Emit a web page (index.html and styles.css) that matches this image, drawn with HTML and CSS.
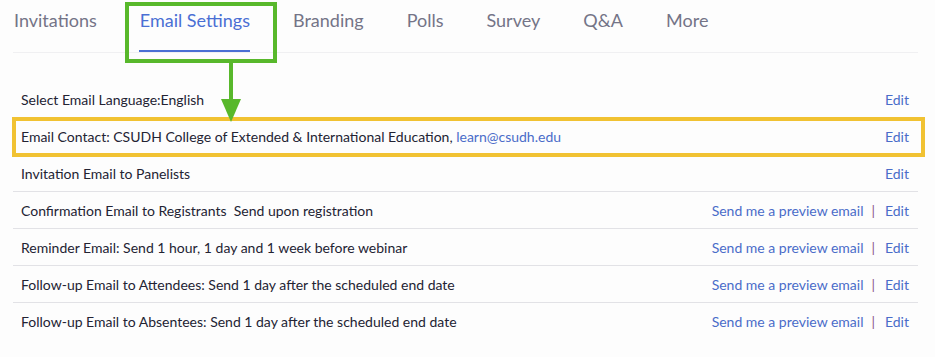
FILE: index.html
```html
<!DOCTYPE html>
<html lang="en">
<head>
    <meta charset="UTF-8">
    <title>Email Settings</title>
    <link rel="stylesheet" href="styles.css">
</head>
<body>
    <div class="page">
        <ul class="tabs">
            <li class="tab">Invitations</li>
            <li class="tab active">Email Settings</li>
            <li class="tab">Branding</li>
            <li class="tab">Polls</li>
            <li class="tab">Survey</li>
            <li class="tab">Q&amp;A</li>
            <li class="tab">More</li>
        </ul>

        <ul class="settings">
            <li class="setting-row first">
                <span class="label">Select Email Language:English</span>
                <span class="actions"><a class="link">Edit</a></span>
            </li>
            <li class="setting-row highlight">
                <span class="label">Email Contact: CSUDH College of Extended &amp; International Education, <a class="link">learn@csudh.edu</a></span>
                <span class="actions"><a class="link">Edit</a></span>
            </li>
            <li class="setting-row">
                <span class="label">Invitation Email to Panelists</span>
                <span class="actions"><a class="link">Edit</a></span>
            </li>
            <li class="setting-row">
                <span class="label">Confirmation Email to Registrants&nbsp; Send upon registration</span>
                <span class="actions"><a class="link">Send me a preview email</a><span class="divider">|</span><a class="link">Edit</a></span>
            </li>
            <li class="setting-row">
                <span class="label">Reminder Email: Send 1 hour, 1 day and 1 week before webinar</span>
                <span class="actions"><a class="link">Send me a preview email</a><span class="divider">|</span><a class="link">Edit</a></span>
            </li>
            <li class="setting-row">
                <span class="label">Follow-up Email to Attendees: Send 1 day after the scheduled end date</span>
                <span class="actions"><a class="link">Send me a preview email</a><span class="divider">|</span><a class="link">Edit</a></span>
            </li>
            <li class="setting-row last">
                <span class="label">Follow-up Email to Absentees: Send 1 day after the scheduled end date</span>
                <span class="actions"><a class="link">Send me a preview email</a><span class="divider">|</span><a class="link">Edit</a></span>
            </li>
        </ul>

        <!-- annotation overlays -->
        <div class="callout-box"></div>
        <div class="callout-arrow">
            <svg width="22" height="60" viewBox="0 0 22 60">
                <rect x="9" y="0" width="4" height="40" fill="#58b82b"/>
                <polygon points="1,36 21,36 11,59" fill="#58b82b"/>
            </svg>
        </div>
    </div>
</body>
</html>
```

FILE: styles.css
```css
body {
    margin: 0;
    padding: 0;
    background-color: #fdfdfd;
    font-family: 'Lato', 'Open Sans', sans-serif;
    color: #232333;
}

.page {
    position: relative;
    width: 935px;
    height: 357px;
    padding: 0 17px 0 13px;
    box-sizing: border-box;
}

/* tabs */

.tabs {
    list-style: none;
    margin: 0;
    padding: 0;
    display: flex;
    gap: 42px;
    height: 52px;
    border-bottom: 1px solid #f0f0f2;
}

.tab {
    font-size: 18px;
    color: #747487;
    padding-top: 9px;
    padding-left: 1px;
    box-sizing: border-box;
    height: 52px;
}

.tab.active {
    color: #4a6fd4;
    border-bottom: 2px solid #4a6fd4;
}

/* settings list */

.settings {
    list-style: none;
    margin: 28px 0 0 0;
    padding: 0;
    font-size: 14px;
}

.setting-row {
    display: flex;
    justify-content: space-between;
    align-items: center;
    height: 36px;
    padding: 0 9px 0 8px;
    border-bottom: 1px solid #e2e2e6;
}

.setting-row.first {
    border-bottom-color: transparent;
}

.setting-row.last {
    border-bottom: none;
}

.link {
    color: #4a6cc9;
    text-decoration: none;
    cursor: pointer;
}

.actions {
    display: flex;
    align-items: center;
}

.divider {
    color: #8a5a8a;
    margin: 0 10px 0 8px;
}

.highlight {
    position: relative;
}

.highlight::after {
    content: '';
    position: absolute;
    left: -1px;
    right: -7px;
    top: -1px;
    bottom: -3px;
    border: 4px solid #f1c232;
}

/* annotations */

.callout-box {
    position: absolute;
    left: 125px;
    top: 2px;
    width: 152px;
    height: 61px;
    border: 4px solid #58b82b;
    box-sizing: border-box;
}

.callout-arrow {
    position: absolute;
    left: 220px;
    top: 63px;
    line-height: 0;
}
```
